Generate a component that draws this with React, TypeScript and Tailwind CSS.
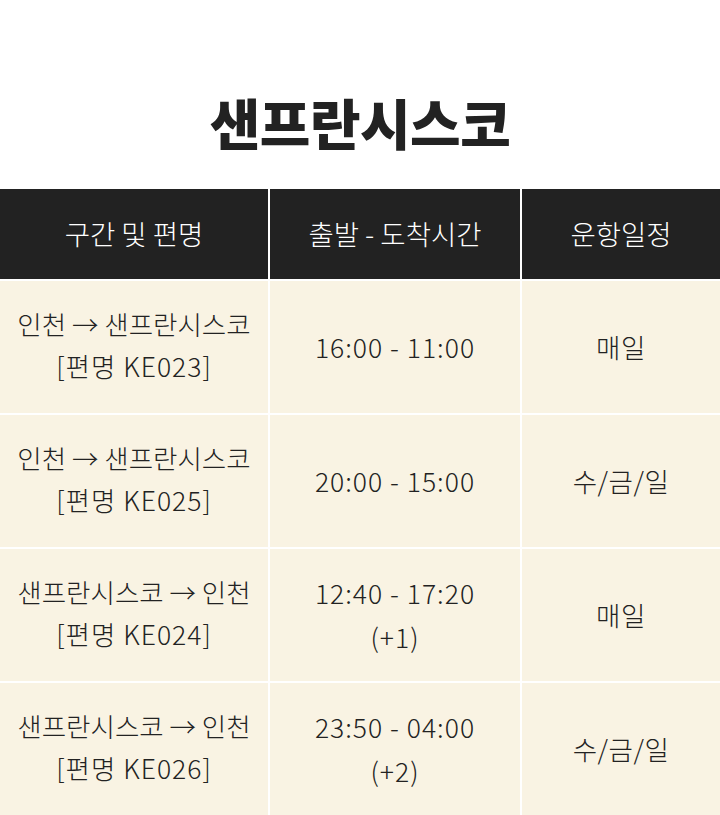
import React from "react";

const rows = [
  { route: "인천 → 샌프란시스코", flight: "[편명 KE023]", time: ["16:00 - 11:00"], days: "매일" },
  { route: "인천 → 샌프란시스코", flight: "[편명 KE025]", time: ["20:00 - 15:00"], days: "수/금/일" },
  { route: "샌프란시스코 → 인천", flight: "[편명 KE024]", time: ["12:40 - 17:20", "(+1)"], days: "매일" },
  { route: "샌프란시스코 → 인천", flight: "[편명 KE026]", time: ["23:50 - 04:00", "(+2)"], days: "수/금/일" },
];

export default function App() {
  return (
    <div
      className="w-[720px] h-[815px] bg-white overflow-hidden"
      style={{ fontFamily: '"Noto Sans CJK KR", "Noto Sans", sans-serif' }}
    >
      <div className="h-[189px] flex justify-center pt-[94px]">
        <h1 className="text-[55px] leading-none font-black text-[#222] tracking-[-0.5px]">샌프란시스코</h1>
      </div>
      <div className="grid grid-cols-[268px_250px_198px] gap-[2px] bg-white">
        {["구간 및 편명", "출발 - 도착시간", "운항일정"].map((h) => (
          <div key={h} className="h-[90px] bg-[#222222] text-white text-[27.5px] font-light flex items-center justify-center">
            {h}
          </div>
        ))}
        {rows.map((r, i) => (
          <React.Fragment key={i}>
            <div className="h-[132px] pb-[4px] bg-[#f9f3e3] text-[#222] text-[26.5px] font-light leading-[42px] flex flex-col items-center justify-center">
              <span>{r.route}</span>
              <span className="tracking-[1px]">{r.flight}</span>
            </div>
            <div className="h-[132px] bg-[#f9f3e3] text-[#222] text-[26.5px] font-light leading-[44px] tracking-[1px] flex flex-col items-center justify-center">
              {r.time.map((t) => (
                <span key={t}>{t}</span>
              ))}
            </div>
            <div className="h-[132px] bg-[#f9f3e3] text-[#222] text-[26.5px] font-light tracking-[0.5px] flex items-center justify-center">
              {r.days}
            </div>
          </React.Fragment>
        ))}
      </div>
    </div>
  );
}
